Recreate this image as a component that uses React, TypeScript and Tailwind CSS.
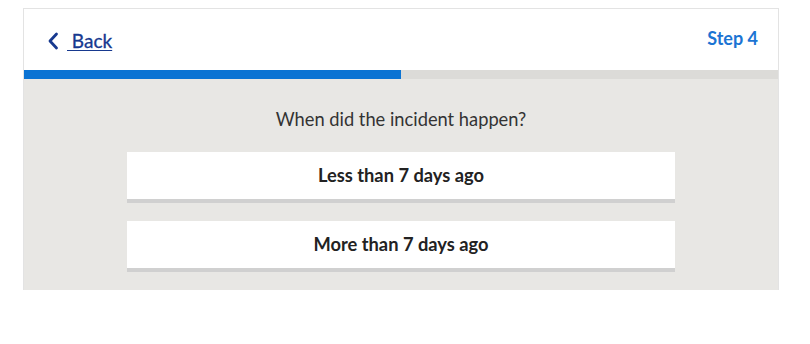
export default function App() {
  return (
    <div className="w-[810px] h-[344px] bg-white pt-2 pl-[23px]" style={{ fontFamily: "Lato, 'Noto Sans', sans-serif" }}>
      <div className="w-[756px] border border-[#e3e3e3] border-b-0">
        <div className="h-[61px] flex items-start justify-between pl-[23px] pr-[20px] bg-white">
          <a href="#" className="flex items-center mt-[22px] text-[#17398f] text-[19px] underline underline-offset-2">
            <svg width="12" height="18" viewBox="0 0 12 18" className="mr-[8px]">
              <path d="M9.5 2 L3 9 L9.5 16" fill="none" stroke="#17398f" strokeWidth="2.8" strokeLinecap="round" strokeLinejoin="round" />
            </svg>
            <span className="leading-none whitespace-pre [-webkit-text-stroke:0.3px_#17398f]"> Back</span>
          </a>
          <div className="mt-[20px] text-[#1b74d3] text-[18px] font-bold leading-none">Step 4</div>
        </div>
        <div className="flex h-[9px] bg-[#dcdbd8]">
          <div className="w-[377px] bg-[#0b73d3]" />
        </div>
        <div className="bg-[#e8e7e4] flex flex-col items-center pt-[28px] pb-[18px]">
          <p className="text-[18.3px] text-[#333333] leading-[24px] mb-[21px]">When did the incident happen?</p>
          <div className="flex flex-col gap-[18px] w-[548px]">
            <button className="h-[51px] bg-white border-b-4 border-[#d0d0d0] text-[18.3px] font-bold text-[#222]">Less than 7 days ago</button>
            <button className="h-[51px] bg-white border-b-4 border-[#d0d0d0] text-[18.3px] font-bold text-[#222]">More than 7 days ago</button>
          </div>
        </div>
      </div>
    </div>
  );
}
